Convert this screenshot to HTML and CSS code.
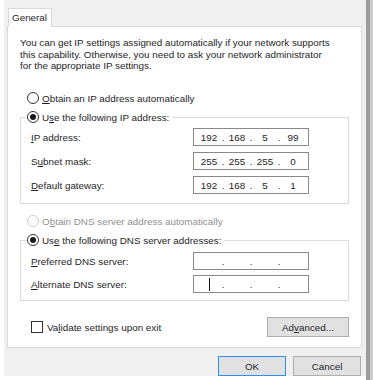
FILE: index.html
```html
<!DOCTYPE html>
<html lang="en">
<head>
<meta charset="utf-8">
<title>Internet Protocol Version 4 (TCP/IPv4) Properties</title>
<link rel="stylesheet" href="styles.css">
</head>
<body>
<div class="screen">
  <div class="dialog">
    <div class="tabs"><div class="tab">General</div></div>
    <div class="panel">
      <p class="intro">You can get IP settings assigned automatically if your network supports<br>this capability. Otherwise, you need to ask your network administrator<br>for the appropriate IP settings.</p>

      <div class="radio-row"><span class="radio"></span><span><u>O</u>btain an IP address automatically</span></div>
      <fieldset class="group ip-group">
        <legend class="radio-row"><span class="radio checked"></span><span>U<u>s</u>e the following IP address:</span></legend>
        <div class="fields">
          <span class="label"><u>I</u>P address:</span>
          <div class="ipbox"><span class="oct">192</span><span class="dot">.</span><span class="oct">168</span><span class="dot">.</span><span class="oct">5</span><span class="dot">.</span><span class="oct">99</span></div>
          <span class="label">S<u>u</u>bnet mask:</span>
          <div class="ipbox"><span class="oct">255</span><span class="dot">.</span><span class="oct">255</span><span class="dot">.</span><span class="oct">255</span><span class="dot">.</span><span class="oct">0</span></div>
          <span class="label"><u>D</u>efault gateway:</span>
          <div class="ipbox"><span class="oct">192</span><span class="dot">.</span><span class="oct">168</span><span class="dot">.</span><span class="oct">5</span><span class="dot">.</span><span class="oct">1</span></div>
        </div>
      </fieldset>

      <div class="radio-row dns-auto disabled"><span class="radio"></span><span>O<u>b</u>tain DNS server address automatically</span></div>
      <fieldset class="group dns-group">
        <legend class="radio-row"><span class="radio checked"></span><span>Us<u>e</u> the following DNS server addresses:</span></legend>
        <div class="fields">
          <span class="label"><u>P</u>referred DNS server:</span>
          <div class="ipbox"><span class="oct"></span><span class="dot">.</span><span class="oct"></span><span class="dot">.</span><span class="oct"></span><span class="dot">.</span><span class="oct"></span></div>
          <span class="label"><u>A</u>lternate DNS server:</span>
          <div class="ipbox"><span class="oct"><span class="caret"></span></span><span class="dot">.</span><span class="oct"></span><span class="dot">.</span><span class="oct"></span><span class="dot">.</span><span class="oct"></span></div>
        </div>
      </fieldset>

      <div class="bottom-row">
        <div class="check-row"><span class="checkbox"></span><span>Va<u>l</u>idate settings upon exit</span></div>
        <button class="btn advanced">Ad<u>v</u>anced...</button>
      </div>
    </div>
    <div class="footer">
      <button class="btn default">OK</button>
      <button class="btn">Cancel</button>
    </div>
  </div>
  <div class="edge"></div>
</div>
</body>
</html>
```

FILE: styles.css
```css
html, body {
  margin: 0;
  padding: 0;
  background: #ffffff;
}

body {
  font-family: "Liberation Sans", Arial, sans-serif;
  font-size: 9.85px;
  color: #1e1e1e;
}

u {
  text-decoration: underline;
  text-decoration-thickness: 1px;
  text-underline-offset: 1px;
}

.screen {
  display: flex;
  height: 380px;
}

.dialog {
  margin-left: 4px;
  width: 362px;
  height: 376px;
  background: #f0f0f0;
  display: flex;
  flex-direction: column;
}

.edge {
  flex: 1;
  background: linear-gradient(to right, #9d9d9d 0, #9d9d9d 4px, #cdcdcd 4px);
}

.tabs {
  display: flex;
  padding: 8px 0 0 4px;
}

.tab {
  position: relative;
  z-index: 1;
  height: 18px;
  line-height: 18px;
  padding: 0 4px 0 3px;
  background: #ffffff;
  border: 1px solid #d9d9d9;
  border-bottom: none;
  margin-bottom: -1px;
}

.panel {
  margin-left: 3px;
  width: 355px;
  box-sizing: border-box;
  background: #ffffff;
  border: 1px solid #d9d9d9;
  padding: 0 12px 10px 12px;
}

.intro {
  margin: 10px 0 19.5px 0;
  line-height: 11.5px;
  white-space: nowrap;
}

.radio-row {
  display: flex;
  align-items: center;
  height: 14px;
  padding-left: 7px;
  gap: 3px;
  white-space: nowrap;
}

.radio {
  width: 12px;
  height: 12px;
  box-sizing: border-box;
  border: 1px solid #333333;
  border-radius: 50%;
  background: #ffffff;
  display: flex;
  align-items: center;
  justify-content: center;
  flex: none;
}

.radio.checked::after {
  content: "";
  width: 6px;
  height: 6px;
  border-radius: 50%;
  background: #1a1a1a;
}

.disabled {
  color: #8f8f8f;
}

.disabled .radio {
  border-color: #cccccc;
}

.group {
  margin: 5px 0 0 0;
  border: 1px solid #dcdcdc;
  padding: 4px 0 9px 10px;
  min-width: 0;
}

.group legend {
  margin-left: -4px;
  padding: 0 3px 0 0;
  gap: 3px;
}

.fields {
  display: grid;
  grid-template-columns: 162px 116px;
  grid-auto-rows: 18px;
  row-gap: 6px;
  align-items: center;
}

.dns-group {
  padding: 5px 0 7px 10px;
}

.dns-group .fields {
  row-gap: 5px;
}

.label {
  white-space: nowrap;
}

.ipbox {
  height: 18px;
  box-sizing: border-box;
  border: 1px solid #8a8a8a;
  background: #ffffff;
  display: flex;
  align-items: center;
  padding-left: 4px;
}

.oct {
  width: 22px;
  text-align: center;
  display: flex;
  justify-content: center;
  align-items: center;
  height: 14px;
}

.dot {
  width: 6px;
  text-align: center;
}

.caret {
  width: 1px;
  height: 13px;
  background: #111111;
}

.dns-auto {
  margin-top: 10px;
}

.bottom-row {
  margin-top: 16px;
  display: flex;
  align-items: center;
  justify-content: space-between;
}

.check-row {
  display: flex;
  align-items: center;
  gap: 4px;
  padding-left: 11px;
}

.checkbox {
  width: 12px;
  height: 12px;
  box-sizing: border-box;
  border: 1px solid #333333;
  background: #ffffff;
}

.btn {
  font-family: inherit;
  font-size: inherit;
  color: #1e1e1e;
  height: 20px;
  width: 68px;
  box-sizing: border-box;
  background: #e1e1e1;
  border: 1px solid #adadad;
  padding: 0;
  margin: 0;
}

.advanced {
  width: 82px;
}

.btn.default {
  border-color: #3d8ee0;
  box-shadow: inset 0 0 0 1px #cfe3f6;
}

.footer {
  display: flex;
  justify-content: flex-end;
  gap: 7px;
  padding-right: 5px;
  margin-top: 8px;
}
```
